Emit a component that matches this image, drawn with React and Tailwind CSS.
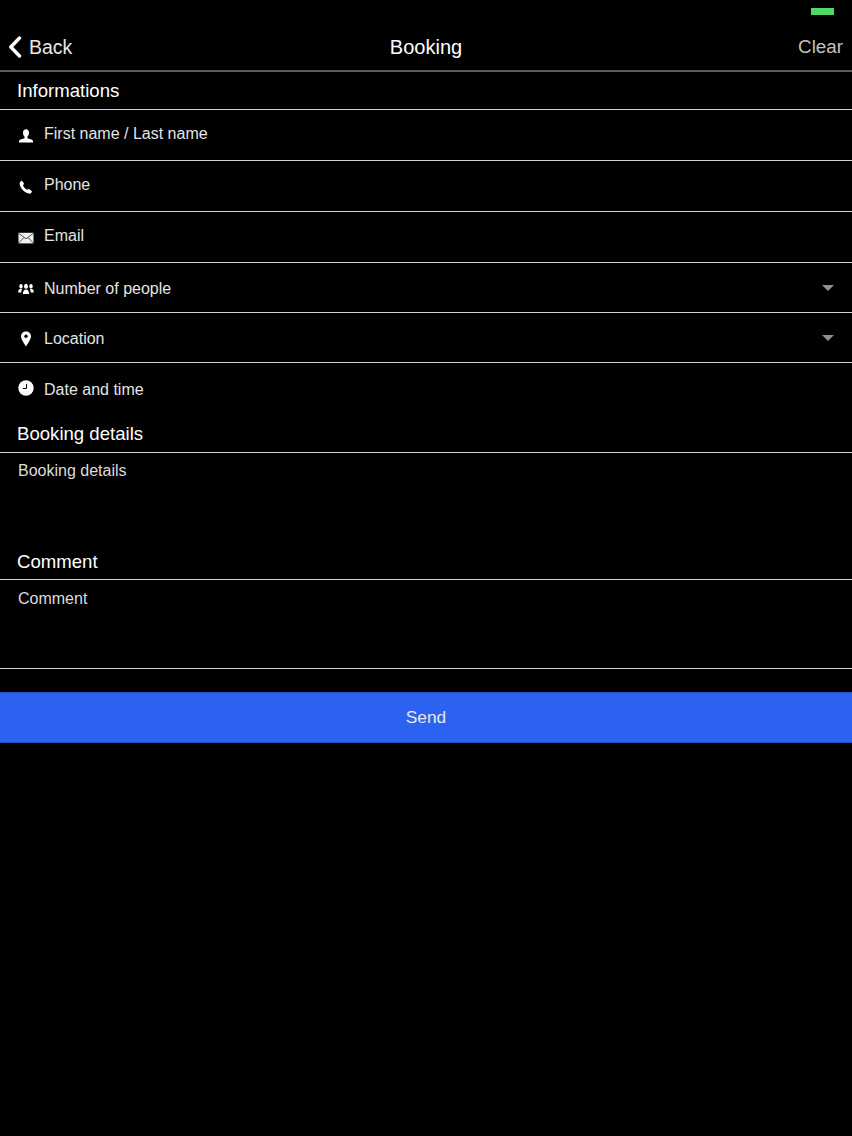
import React from "react";

const font = "font-['Liberation_Sans',Arial,sans-serif]";

function BackChevron() {
  return (
    <svg width="14" height="22" viewBox="0 0 14 22" fill="none">
      <path d="M11.500 2 2.800 11l8.700 9" stroke="white" strokeWidth="3.400" strokeLinecap="round" strokeLinejoin="round" />
    </svg>
  );
}

function UserIcon() {
  return (
    <svg width="16" height="16" viewBox="0 0 16 16" fill="white">
      <path d="M8 1.200c1.900 0 3 1.400 3 3.500 0 1.700-.7 3.100-1.500 3.900v1.700c1.700.6 4.600 1 5.500 2.400v1.700H1v-1.700c.9-1.400 3.800-1.800 5.500-2.400V8.600C5.700 7.800 5 6.400 5 4.700 5 2.600 6.100 1.200 8 1.200z" />
    </svg>
  );
}

function PhoneIcon() {
  return (
    <svg width="16" height="16" viewBox="0 0 16 16" fill="white">
      <path d="M3.800 1.500 6.200 4.800 5 6.300c.7 2 2.400 3.700 4.400 4.500l1.300-1 3.300 2.500-.9 1.600c-.5.700-1.300.9-2.200.7C6 13.200 2.600 9.600 1.700 5.200c-.2-1 0-1.900.6-2.500z" />
    </svg>
  );
}

function MailIcon() {
  return (
    <svg width="16" height="16" viewBox="0 0 16 16">
      <rect x="0.500" y="2.800" width="15" height="10.600" fill="#f2f2f2" />
      <path d="M.8 3.400 8 8.800l7.200-5.400M.8 13l5.200-5.600M15.200 13 10 7.400" fill="none" stroke="#3a3a3a" strokeWidth="0.900" />
    </svg>
  );
}

function PeopleIcon() {
  return (
    <svg width="16" height="16" viewBox="0 0 16 16" fill="white">
      <ellipse cx="8" cy="5.300" rx="2" ry="2.500" />
      <path d="M4.900 13c0-2.900 1-4.600 3.100-4.600s3.100 1.700 3.100 4.600z" />
      <ellipse cx="3" cy="5.200" rx="1.700" ry="2.200" />
      <path d="M.2 11.500c0-2.400.9-3.700 2.800-3.700.5 0 .8.100 1.100.2-.5.800-.8 1.900-.8 3.500z" />
      <ellipse cx="13" cy="5.200" rx="1.700" ry="2.200" />
      <path d="M15.800 11.500c0-2.400-.9-3.700-2.800-3.700-.5 0-.8.100-1.100.2.500.8.800 1.900.8 3.500z" />
    </svg>
  );
}

function PinIcon() {
  return (
    <svg width="16" height="16" viewBox="0 0 16 16">
      <path d="M8 .5c2.900 0 5 2.100 5 4.800 0 3.200-3.100 7-5 10.200C6.100 12.300 3 8.500 3 5.300 3 2.600 5.100.5 8 .5z" fill="white" />
      <circle cx="8" cy="5.300" r="1.700" fill="#000" />
    </svg>
  );
}

function ClockIcon() {
  return (
    <svg width="16" height="16" viewBox="0 0 16 16">
      <circle cx="8" cy="8" r="7.700" fill="white" />
      <path d="M8.500 3.800v4.700H5" fill="none" stroke="#000" strokeWidth="1" />
    </svg>
  );
}

function Caret() {
  return <div className="w-0 h-0 border-x-[6px] border-x-transparent border-t-[6px] border-t-[#8e8e8e] mb-[3px]" />;
}

function Row({ icon, label, caret, iconClass, labelClass, className }) {
  return (
    <div className={`flex items-center pl-[17px] pr-[18px] text-[16px] text-[#e4e4e4] ${className}`}>
      <div className={`w-[17px] flex justify-center shrink-0 ${iconClass}`}>{icon}</div>
      <span className={`ml-[10px] flex-1 leading-none ${labelClass}`}>{label}</span>
      {caret && <Caret />}
    </div>
  );
}

function SectionTitle({ children, className }) {
  return <div className={`flex items-center pl-[17px] pt-[2px] text-[18.600px] text-white ${className}`}>{children}</div>;
}

export default function App() {
  return (
    <div className={`w-[852px] h-[1136px] bg-black overflow-hidden ${font}`}>
      {/* status bar */}
      <div className="h-[22px] flex justify-end pt-[8px] pr-[18px]">
        <div className="w-[23px] h-[7px] bg-[#4cd964]" />
      </div>

      {/* nav */}
      <div className="h-[48px] flex items-center justify-between pl-[8px] pr-[9px] pt-[2px] pb-[1px] relative">
        <div className="flex items-center text-[#e6e6e6] text-[19.500px]">
          <BackChevron />
          <span className="ml-[7px] pt-[2px]">Back</span>
        </div>
        <span className="absolute left-0 right-0 text-center text-white text-[20px]">Booking</span>
        <span className="text-[#c2c2c2] text-[18.800px] pt-[2px]">Clear</span>
      </div>
      <div className="h-[1.500px] bg-[#5c5c5c]" />

      <SectionTitle className="h-[37px]">Informations</SectionTitle>
      <div className="h-[1.500px] bg-[#d4d4d4]" />
      <Row icon={<UserIcon />} iconClass="mt-[3px]" label="First name / Last name" className="h-[49.500px] pb-[1px]" />
      <div className="h-[1.500px] bg-[#d4d4d4]" />
      <Row icon={<PhoneIcon />} iconClass="mt-[3px]" label="Phone" className="h-[49.500px] pb-[1px]" />
      <div className="h-[1.500px] bg-[#d4d4d4]" />
      <Row icon={<MailIcon />} iconClass="mt-[3px]" label="Email" className="h-[49.500px] pb-[1px]" />
      <div className="h-[1.500px] bg-[#d4d4d4]" />
      <Row icon={<PeopleIcon />} label="Number of people" caret className="h-[48.500px] pt-[4px]" />
      <div className="h-[1.500px] bg-[#d4d4d4]" />
      <Row icon={<PinIcon />} label="Location" caret className="h-[48.500px] pt-[4px]" />
      <div className="h-[1.500px] bg-[#d4d4d4]" />
      <Row icon={<ClockIcon />} label="Date and time" labelClass="mt-[4px]" className="h-[50.500px]" />

      <SectionTitle className="h-[38px]">Booking details</SectionTitle>
      <div className="h-[1.500px] bg-[#d4d4d4]" />
      <div className="h-[89.500px] pl-[18px] pt-[6px] text-[16px] text-[#dcdcdc]">Booking details</div>
      <SectionTitle className="h-[36px]">Comment</SectionTitle>
      <div className="h-[1.500px] bg-[#d4d4d4]" />
      <div className="h-[87.500px] pl-[18px] pt-[7px] text-[16px] text-[#dcdcdc]">Comment</div>
      <div className="h-[1.500px] bg-[#d4d4d4]" />

      <button className="mt-[22.500px] w-full h-[51px] flex items-center justify-center pt-[2px] bg-[#2b63f0] border-y border-y-[#2450c4] text-[#e8e8e8] text-[17.300px]">
        Send
      </button>
    </div>
  );
}
